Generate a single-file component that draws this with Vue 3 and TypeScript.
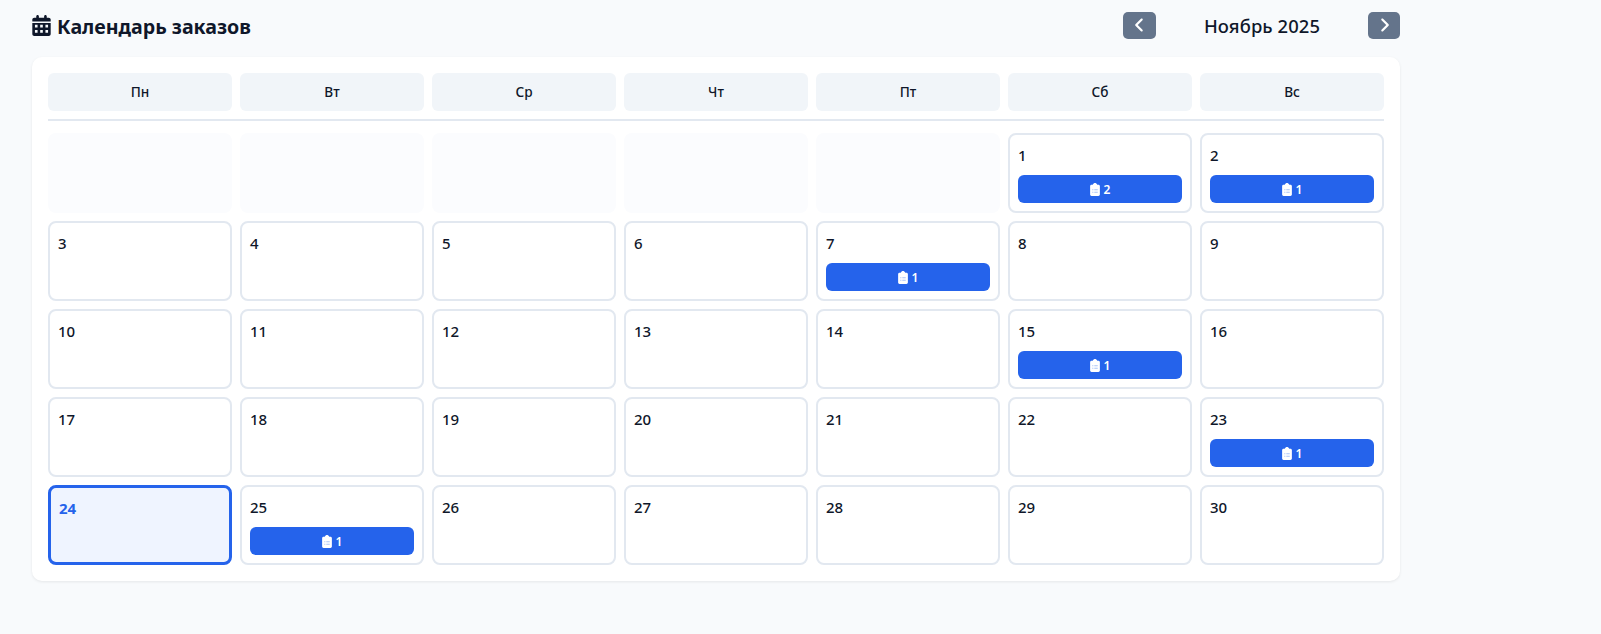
<script setup lang="ts">
interface Day {
  num: number
  orders?: number
  today?: boolean
}

const weekdays = ['Пн', 'Вт', 'Ср', 'Чт', 'Пт', 'Сб', 'Вс']
const blanks = 5
const orders: Record<number, number> = { 1: 2, 2: 1, 7: 1, 15: 1, 23: 1, 25: 1 }

const days: Day[] = Array.from({ length: 30 }, (_, i) => ({
  num: i + 1,
  orders: orders[i + 1],
  today: i + 1 === 24,
}))
</script>

<template>
  <div class="page">
    <div class="top">
      <h2 class="title">
        <svg class="cal-icon" viewBox="0 0 448 512" fill="currentColor">
          <path d="M96 32V64H48C21.500 64 0 85.500 0 112v48H448V112c0-26.500-21.500-48-48-48H352V32c0-17.700-14.300-32-32-32s-32 14.300-32 32V64H160V32c0-17.700-14.300-32-32-32S96 14.300 96 32zM448 192H0V464c0 26.500 21.500 48 48 48H400c26.500 0 48-21.500 48-48V192zM64 240h64v64H64V240zm128 0h64v64H192V240zm128 0h64v64H320V240zM64 368h64v64H64V368zm128 0h64v64H192V368zm128 0h64v64H320V368z" fill-rule="evenodd" />
        </svg>
        <span>Календарь заказов</span>
      </h2>
      <div class="nav">
        <button class="nav-btn prev">
          <svg viewBox="0 0 320 512" fill="currentColor">
            <path d="M41.400 233.400c-12.500 12.500-12.500 32.800 0 45.300l160 160c12.500 12.500 32.800 12.500 45.300 0s12.500-32.800 0-45.300L109.300 256 246.600 118.600c12.500-12.500 12.500-32.800 0-45.300s-32.800-12.500-45.300 0l-160 160z" />
          </svg>
        </button>
        <span class="month">Ноябрь 2025</span>
        <button class="nav-btn">
          <svg viewBox="0 0 320 512" fill="currentColor">
            <path d="M278.600 233.400c12.500 12.500 12.500 32.800 0 45.300l-160 160c-12.500 12.500-32.800 12.500-45.300 0s-12.500-32.800 0-45.300L210.700 256 73.400 118.600c-12.500-12.500-12.500-32.800 0-45.300s32.800-12.500 45.300 0l160 160z" />
          </svg>
        </button>
      </div>
    </div>

    <div class="card">
      <div class="week">
        <div v-for="w in weekdays" :key="w" class="weekday">{{ w }}</div>
      </div>
      <div class="grid">
        <div v-for="n in blanks" :key="'b' + n" class="cell blank"></div>
        <div
          v-for="d in days"
          :key="d.num"
          :class="['cell', { today: d.today }]"
        >
          <div class="num">{{ d.num }}</div>
          <div v-if="d.orders" class="badge">
            <svg class="clip" viewBox="0 0 384 512">
              <path fill="currentColor" d="M192 0c-36 0-66 22-78 54-3 6-8 10-15 10H56C25 64 0 89 0 120v336c0 31 25 56 56 56h272c31 0 56-25 56-56V120c0-31-25-56-56-56h-43c-7 0-12-4-15-10C258 22 228 0 192 0z" />
              <path fill="#a9c3f7" d="M84 250h44v36H84zM164 250h136v36H164zM84 346h44v36H84zM164 346h136v36H164z" />
            </svg>
            <span>{{ d.orders }}</span>
          </div>
        </div>
      </div>
    </div>
  </div>
</template>

<style>
html,
body {
  margin: 0;
  background: #f8fafc;
}
</style>

<style scoped>
.page {
  box-sizing: border-box;
  width: 1368px;
  margin-left: 32px;
  padding-top: 12px;
  height: 634px;
  font-family: "Noto Sans", "Open Sans", sans-serif;
  color: #0f172a;
}

.top {
  display: flex;
  align-items: center;
  justify-content: space-between;
  height: 27px;
  margin-bottom: 18px;
}

.title {
  display: flex;
  align-items: center;
  gap: 6px;
  margin: 0;
  font-size: 19.6px;
  font-weight: 700;
  line-height: 27px;
}

.title span {
  padding-top: 2px;
}

.cal-icon {
  width: 19px;
  height: 21px;
  margin-top: -1px;
}

.nav {
  display: flex;
  align-items: center;
  gap: 16px;
}

.month {
  width: 180px;
  text-align: center;
  font-size: 18.4px;
  font-weight: 500;
  letter-spacing: 0.1px;
}

.nav-btn {
  display: flex;
  align-items: center;
  justify-content: center;
  width: 32px;
  height: 27px;
  padding: 0;
  border: none;
  border-radius: 5px;
  background: #64748b;
  color: #fff;
}

.nav-btn.prev {
  width: 33px;
}

.nav-btn svg {
  width: 11px;
  height: 18px;
  margin-top: -1px;
}

.card {
  box-sizing: border-box;
  padding: 16px;
  background: #fff;
  border-radius: 10px;
  box-shadow: 0 1px 3px rgba(0, 0, 0, 0.08);
}

.week {
  display: grid;
  grid-template-columns: repeat(7, 184px);
  gap: 8px;
  padding-bottom: 8px;
  border-bottom: 2px solid #e2e8f0;
  margin-bottom: 12px;
}

.weekday {
  box-sizing: border-box;
  display: flex;
  align-items: center;
  justify-content: center;
  height: 38px;
  padding-bottom: 1px;
  background: #f1f5f9;
  border-radius: 6px;
  font-size: 13.6px;
  font-weight: 500;
}

.grid {
  display: grid;
  grid-template-columns: repeat(7, 184px);
  grid-auto-rows: 80px;
  gap: 8px;
}

.cell {
  box-sizing: border-box;
  display: flex;
  flex-direction: column;
  padding: 8px;
  background: #fff;
  border: 2px solid #e2e8f0;
  border-radius: 8px;
}

.cell.blank {
  background: #fbfcfe;
  border-color: transparent;
}

.cell.today {
  background: #eff4ff;
  border: 3px solid #2563eb;
}

.cell.today .num {
  color: #2563eb;
  font-weight: 700;
}

.num {
  font-size: 15px;
  font-weight: 500;
  line-height: 24px;
  height: 24px;
  margin-bottom: 8px;
}

.badge {
  display: flex;
  align-items: center;
  justify-content: center;
  gap: 4px;
  height: 28px;
  background: #2563eb;
  border-radius: 6px;
  color: #fff;
  font-size: 12px;
  font-weight: 600;
}

.clip {
  width: 10px;
  height: 13px;
}
</style>
